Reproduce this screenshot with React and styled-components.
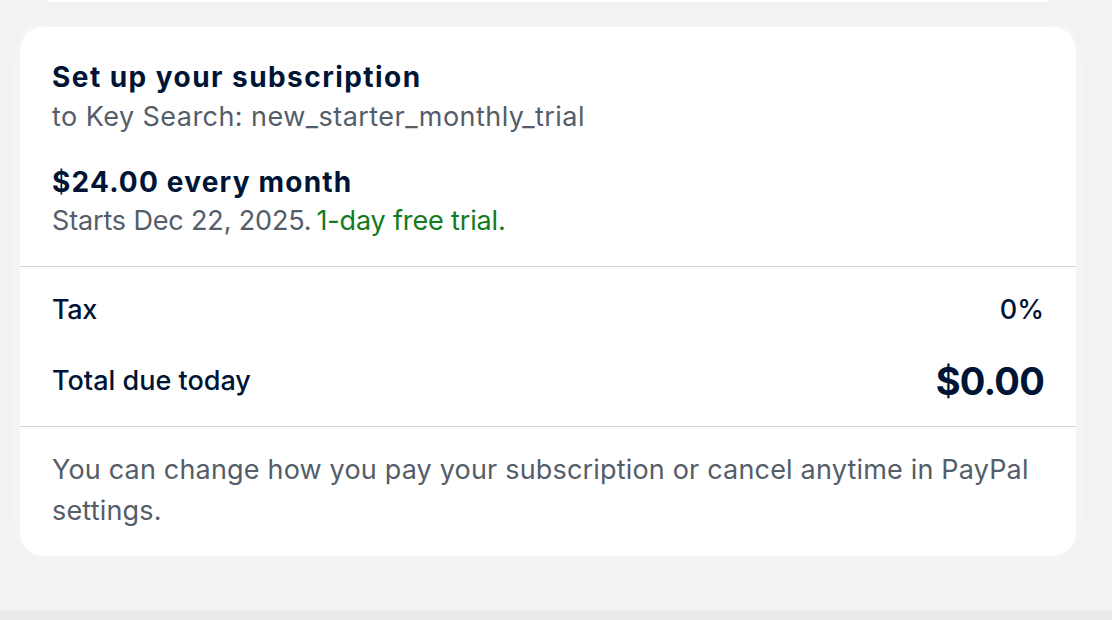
import React from 'react'
import styled, { createGlobalStyle } from 'styled-components';

const GlobalStyle = createGlobalStyle`
  html, body {
    margin: 0;
    padding: 0;
    background: #f1f2f4;
  }
  body {
    font-family: Inter, "Noto Sans", "Liberation Sans", sans-serif;
    -webkit-font-smoothing: antialiased;
  }
`;

function App() {
  return (
    <Page>
      <GlobalStyle />
      <PrevCardEdge />
      <Card>
        <Section $top={32} $bottom={27}>
          <Heading>Set up your subscription</Heading>
          <Sub $spacing={0.45}>to Key Search: new_starter_monthly_trial</Sub>
          <Price>$24.00 every month</Price>
          <Sub $gap={3} $spacing={-0.15}>
            Starts Dec 22, 2025.<Trial>1-day free trial.</Trial>
          </Sub>
        </Section>
        <Section $top={25} $bottom={23}>
          <Row>
            <Label $spacing={-0.4}>Tax</Label>
            <Label>0%</Label>
          </Row>
          <Row $gap={31}>
            <Label>Total due today</Label>
            <Total>$0.00</Total>
          </Row>
        </Section>
        <Section $top={22} $bottom={25} $last>
          <Note>
            You can change how you pay your subscription or cancel anytime in PayPal settings.
          </Note>
        </Section>
      </Card>
      <BottomBand />
    </Page>
  );
}

export default App

const Page = styled.div`
  height: 620px;
  overflow: hidden;
  box-sizing: border-box;
  padding: 0 36px 0 20px;
  display: flex;
  flex-direction: column;
  color: #001435;
`;
const PrevCardEdge = styled.div`
  height: 2px;
  margin: 0 28px 0 27px;
  background: #ffffff;
`;
const Card = styled.div`
  margin-top: 25px;
  background: #ffffff;
  border-radius: 24px;
  box-shadow: 0 0 16px rgba(255, 255, 255, 0.6);
`;
const Section = styled.div`
  padding: ${(p) => p.$top}px 32px ${(p) => p.$bottom}px;
  border-bottom: ${(p) => (p.$last ? 'none' : '1.5px solid #d3d4d6')};
`;
const Heading = styled.h2`
  margin: 0;
  font-size: 28px;
  line-height: 36px;
  font-weight: 700;
  letter-spacing: 1.45px;
`;
const Sub = styled.p`
  margin: ${(p) => p.$gap ?? 4}px 0 0;
  font-size: 27px;
  line-height: 36px;
  letter-spacing: ${(p) => p.$spacing ?? 0}px;
  color: #545d68;
`;
const Price = styled.h3`
  margin: 29px 0 0;
  font-size: 28px;
  line-height: 36px;
  font-weight: 700;
  letter-spacing: 1.2px;
`;
const Trial = styled.span`
  margin-left: 5px;
  color: #137a22;
`;
const Row = styled.div`
  display: flex;
  justify-content: space-between;
  align-items: center;
  margin-top: ${(p) => p.$gap ?? 0}px;
  min-height: 36px;
`;
const Label = styled.span`
  font-size: 27px;
  line-height: 36px;
  font-weight: 500;
  letter-spacing: ${(p) => p.$spacing ?? 0}px;
`;
const Total = styled.span`
  font-size: 38px;
  line-height: 44px;
  font-weight: 700;
  letter-spacing: -0.8px;
`;
const Note = styled.p`
  margin: 0;
  font-size: 27px;
  line-height: 41px;
  letter-spacing: 0.18px;
  color: #545d68;
`;
const BottomBand = styled.div`
  margin: auto -36px 0 -20px;
  height: 10px;
  background: #e9eaec;
`;
